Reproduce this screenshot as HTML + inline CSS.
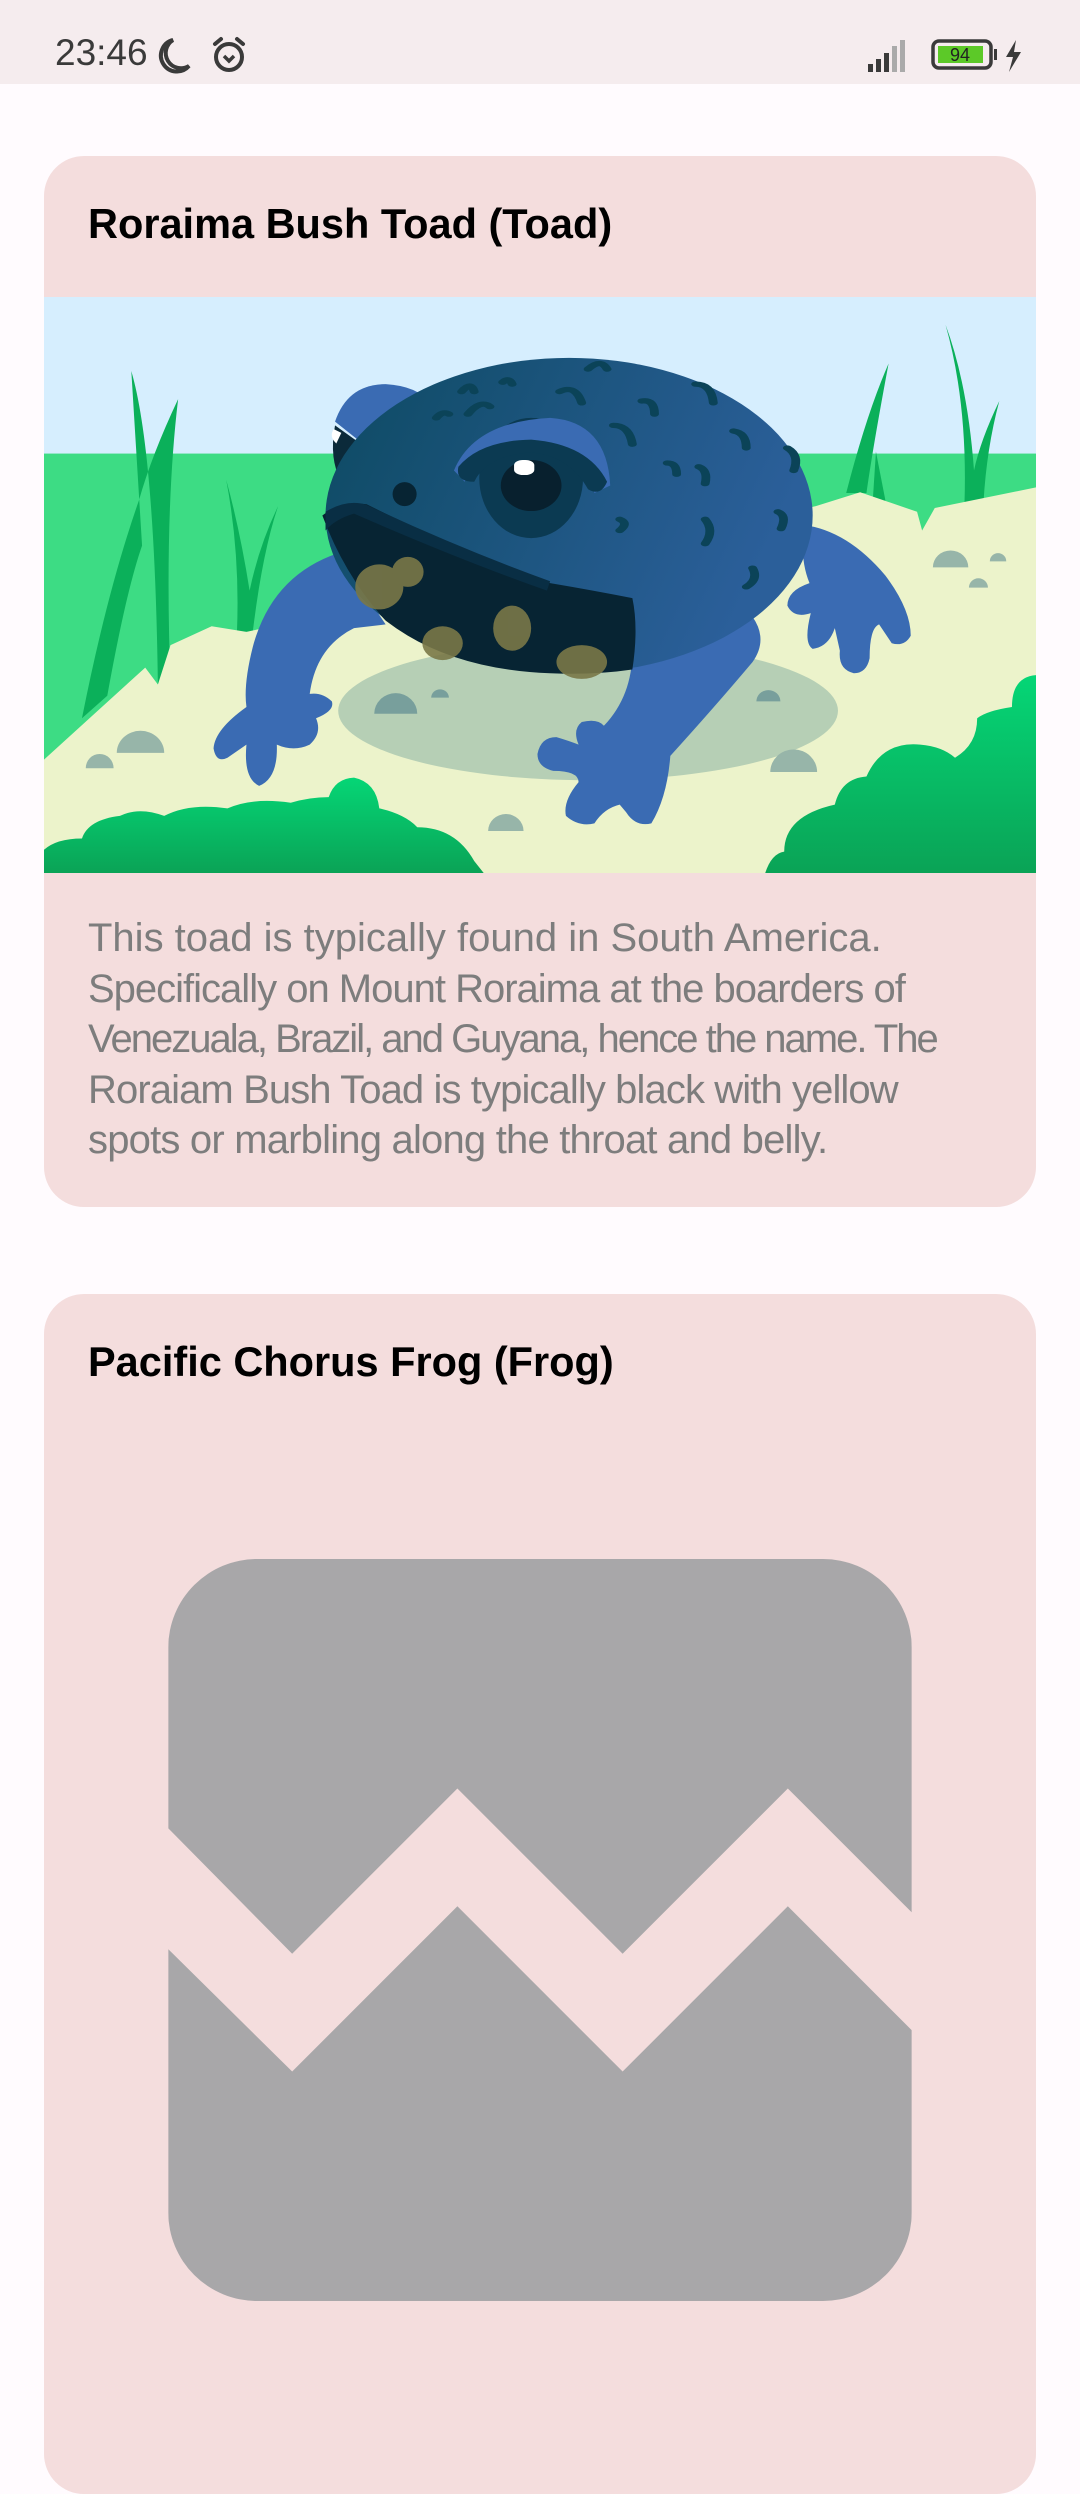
<!DOCTYPE html>
<html><head><meta charset="utf-8">
<style>
html,body{margin:0;padding:0}
body{width:1080px;height:2400px;overflow:hidden;background:#fffbfe;font-family:"Liberation Sans",sans-serif;position:relative}
.sb{position:absolute;left:0;top:0;width:1080px;height:84px;background:#f5ecee}
.time{position:absolute;left:55px;top:32px;font-size:37px;color:#3a3a3a}
.card{position:absolute;left:44px;width:992px;background:#f4dddd;border-radius:40px;overflow:hidden}
.title{position:absolute;left:44px;font-size:41.5px;font-weight:bold;color:#000}
.desc{position:absolute;left:44px;top:757px;font-size:40px;line-height:50.5px;color:#7d7d7d;white-space:nowrap}
.desc span{display:block}
</style></head><body>
<div class="sb">
<div class="time">23:46</div>
<svg style="position:absolute;left:155px;top:36px" width="96" height="40" viewBox="0 0 96 40">
<path d="M18 4 A16 16 0 1 0 34 30 A14 14 0 0 1 18 4Z" fill="none" stroke="#3a3a3a" stroke-width="4"/>
<circle cx="74" cy="21" r="13" fill="none" stroke="#3a3a3a" stroke-width="4"/>
<path d="M60 8 L66 3 M88 8 L82 3" stroke="#3a3a3a" stroke-width="4" stroke-linecap="round"/>
<path d="M69 20 L74 25 L79 20" fill="none" stroke="#3a3a3a" stroke-width="3.5"/>
</svg>
<svg style="position:absolute;left:866px;top:36px" width="166" height="38" viewBox="0 0 166 38">
<rect x="2" y="28" width="5" height="8" fill="#3a3a3a"/><rect x="10" y="23" width="5" height="13" fill="#3a3a3a"/><rect x="18" y="17" width="5" height="19" fill="#3a3a3a"/><rect x="26" y="10" width="5" height="26" fill="#aaa"/><rect x="34" y="4" width="5" height="32" fill="#aaa"/>
<rect x="67" y="5" width="58" height="27" rx="6" fill="none" stroke="#3a3a3a" stroke-width="3.5"/>
<rect x="72" y="10" width="45" height="17" fill="#5cc928"/>
<text x="94" y="25" font-size="18" text-anchor="middle" fill="#222" font-family="Liberation Sans">94</text>
<rect x="128" y="13" width="3" height="11" fill="#3a3a3a"/>
<path d="M150 4 L140 21 L147 21 L143 36 L155 16 L148 16 Z" fill="#3a3a3a"/>
</svg>
</div>

<div class="card" style="top:156px;height:1051px">
<div class="title" style="top:44px">Roraima Bush Toad (Toad)</div>
<svg style="position:absolute;left:0;top:141px" width="992" height="576" viewBox="0 18 1568 1534" preserveAspectRatio="none">
<defs>
<linearGradient id="bd" x1="0" y1="0" x2="1" y2="0.3"><stop offset="0" stop-color="#0d4a62"/><stop offset="1" stop-color="#2b5f9a"/></linearGradient>
<linearGradient id="bu" x1="0" y1="0" x2="0" y2="1"><stop offset="0" stop-color="#05d676"/><stop offset="1" stop-color="#0aa356"/></linearGradient>
</defs>
<rect x="0" y="0" width="1568" height="1600" fill="#d6eefe"/>
<rect x="0" y="435" width="1568" height="1200" fill="#3ddc84"/>
<g fill="#0bb05a">
<path d="M138 215 Q175 430 180 1050 L200 1050 Q190 600 212 290 Q170 440 150 560 Q100 800 60 1140 L100 1080 Q130 800 155 680 Z"/>
<path d="M288 505 Q310 700 305 910 L330 910 Q345 700 370 575 Q340 680 325 800 Q310 640 288 505Z"/>
<path d="M1268 540 Q1300 330 1335 195 Q1310 420 1300 540Z"/>
<path d="M1315 430 L1330 560 L1310 560Z"/>
<path d="M1425 92 Q1460 300 1455 565 L1485 565 Q1490 420 1510 295 Q1480 400 1470 480 Q1460 250 1425 92Z"/>
</g>
<path d="M0 1250 L160 1005 L180 1050 L200 945 L265 895 L320 910 L400 880 L1220 575 L1290 538 L1380 590 L1388 640 L1408 580 L1568 525 L1568 1600 L0 1600Z" fill="#ecf3cb"/>
<ellipse cx="860" cy="1120" rx="395" ry="185" fill="#b6cfb5"/>
<g fill="#97b5a9">
<path d="M115 1232 a37 58 0 0 1 75 0Z"/><path d="M66 1273 a22 38 0 0 1 44 0Z"/>
<path d="M1405 738 a28 45 0 0 1 56 0Z"/><path d="M1495 722 a13 22 0 0 1 26 0Z"/><path d="M1462 792 a15 25 0 0 1 30 0Z"/>
<path d="M1148 1283 a37 60 0 0 1 74 0Z"/><path d="M702 1440 a28 45 0 0 1 56 0Z"/>
</g>
<g fill="#789f9c"><path d="M522 1128 a34 55 0 0 1 68 0Z"/><path d="M612 1085 a14 22 0 0 1 28 0Z"/><path d="M1126 1095 a19 30 0 0 1 38 0Z"/></g>
<g fill="#3a6bb3">
<path d="M465 700 Q360 760 330 950 Q315 1050 320 1110 Q270 1170 268 1220 Q272 1260 290 1245 L320 1210 Q315 1300 340 1320 Q370 1300 368 1210 Q395 1230 420 1210 Q440 1180 430 1140 Q460 1120 455 1095 Q440 1070 420 1075 Q430 950 490 900 L540 890 Z"/>
<path d="M1200 625 Q1270 640 1330 760 Q1370 850 1370 920 Q1360 950 1340 940 L1320 890 Q1305 900 1305 980 Q1300 1020 1280 1020 Q1255 1010 1258 960 L1250 900 Q1240 950 1215 955 Q1200 940 1212 860 Q1185 875 1175 840 Q1175 800 1210 780 Q1195 720 1200 625Z"/>
<path d="M950 680 Q1010 700 1050 790 Q1080 850 1120 870 Q1145 930 1120 990 Q1060 1110 990 1240 Q985 1350 960 1420 Q935 1430 920 1390 L910 1370 Q885 1380 870 1420 Q845 1430 825 1400 Q820 1360 845 1310 Q845 1280 805 1280 Q780 1270 780 1235 Q785 1190 810 1190 Q830 1200 845 1210 Q835 1170 850 1150 Q875 1140 885 1160 Q930 1080 930 960 Q895 870 890 800 Q895 700 950 680Z"/>
<path d="M460 350 Q480 250 540 250 Q590 255 610 300 L520 430 Z"/>
</g>
<path d="M460 360 L510 420 L470 510 Q450 450 460 360Z" fill="#0b2a3a"/>
<path d="M458 370 Q450 390 462 408 L470 380Z" fill="#fff"/>
<ellipse cx="830" cy="600" rx="385" ry="420" fill="url(#bd)"/>
<path d="M440 600 Q470 560 510 570 Q640 680 800 780 Q870 800 930 820 Q940 900 930 1010 Q870 1025 800 1020 Q640 1010 540 880 Q475 760 440 600Z" fill="#072433"/>
<path d="M445 590 Q480 555 510 572 Q660 690 800 775 L795 800 Q660 720 490 595 Q460 610 445 640Z" fill="#092e44"/>
<g fill="#7a7848" opacity="0.9">
<ellipse cx="530" cy="790" rx="38" ry="60"/><ellipse cx="575" cy="750" rx="25" ry="40"/>
<ellipse cx="630" cy="940" rx="32" ry="45"/><ellipse cx="740" cy="900" rx="30" ry="60"/>
<ellipse cx="850" cy="990" rx="40" ry="45"/>
</g>
<ellipse cx="770" cy="500" rx="82" ry="160" fill="#0b3a52"/>
<ellipse cx="770" cy="520" rx="48" ry="68" fill="#08202e"/>
<rect x="743" y="452" width="32" height="40" rx="14" fill="#fff"/>
<path d="M648 480 Q680 350 800 340 Q890 350 895 520 L870 540 Q850 420 770 400 Q690 410 665 510 Z" fill="#3a6bb3"/>
<path d="M655 470 Q690 400 770 398 Q860 410 890 510 Q880 550 860 530 Q830 440 770 432 Q700 440 680 510 Q650 510 655 470Z" fill="#0b3a52"/>
<ellipse cx="570" cy="543" rx="19" ry="32" fill="#072433"/>
<g fill="none" stroke="#0b4358" stroke-width="14" stroke-linecap="round">
<path d="M860 210 Q880 180 890 210"/><path d="M660 270 Q675 240 680 270"/><path d="M725 245 Q735 230 740 250"/>
<path d="M815 270 Q840 250 850 300"/><path d="M670 330 Q690 290 705 310"/><path d="M620 340 Q630 320 640 330"/>
<path d="M945 295 Q965 290 965 330"/><path d="M1030 250 Q1055 250 1058 300"/><path d="M900 360 Q925 360 930 410"/>
<path d="M1090 375 Q1110 380 1110 420"/><path d="M985 460 Q1000 460 1000 490"/><path d="M1035 470 Q1050 480 1045 515"/>
<path d="M1175 420 Q1195 440 1185 480"/><path d="M1160 590 Q1175 600 1165 635"/><path d="M1045 610 Q1060 640 1045 675"/>
<path d="M910 610 Q925 620 910 640"/><path d="M1120 740 Q1130 770 1110 790"/>
</g>
<path d="M0 1552 L0 1490 Q20 1460 60 1460 Q70 1410 120 1400 Q150 1375 190 1400 Q230 1365 290 1380 Q330 1350 390 1365 Q420 1350 450 1350 Q460 1300 490 1298 Q525 1310 530 1380 Q570 1395 590 1430 Q650 1430 680 1520 L695 1552Z" fill="url(#bu)"/>
<path d="M1140 1552 Q1150 1500 1170 1495 Q1170 1400 1250 1370 Q1260 1300 1300 1295 Q1325 1200 1385 1210 Q1420 1215 1440 1245 Q1475 1210 1475 1140 Q1490 1120 1530 1110 Q1530 1030 1568 1025 L1568 1552Z" fill="url(#bu)"/>
</svg>
<div class="desc"><span>This toad is typically found in South America.</span><span style="letter-spacing:-1px">Specifically on Mount Roraima at the boarders of</span><span style="letter-spacing:-2px">Venezuala, Brazil, and Guyana, hence the name. The</span><span style="letter-spacing:-0.9px">Roraiam Bush Toad is typically black with yellow</span><span style="letter-spacing:-0.8px">spots or marbling along the throat and belly.</span></div>
</div>

<div class="card" style="top:1294px;height:1200px">
<div class="title" style="top:44px">Pacific Chorus Frog (Frog)</div>
<svg style="position:absolute;left:124px;top:265px" width="744" height="742" viewBox="110 1019 486 485">
<defs><clipPath id="c"><rect x="110" y="1019" width="486" height="485" rx="58"/></clipPath></defs>
<g clip-path="url(#c)" fill="#a8a7a9">
<path d="M110 1019 H596 V1250 L515 1169 L407 1277 L299 1169 L191 1277 L110 1195Z"/>
<path d="M110 1274 L191 1354 L299 1246 L407 1354 L515 1246 L596 1327 V1504 H110Z"/>
</g>
</svg>
</div>
</body></html>
